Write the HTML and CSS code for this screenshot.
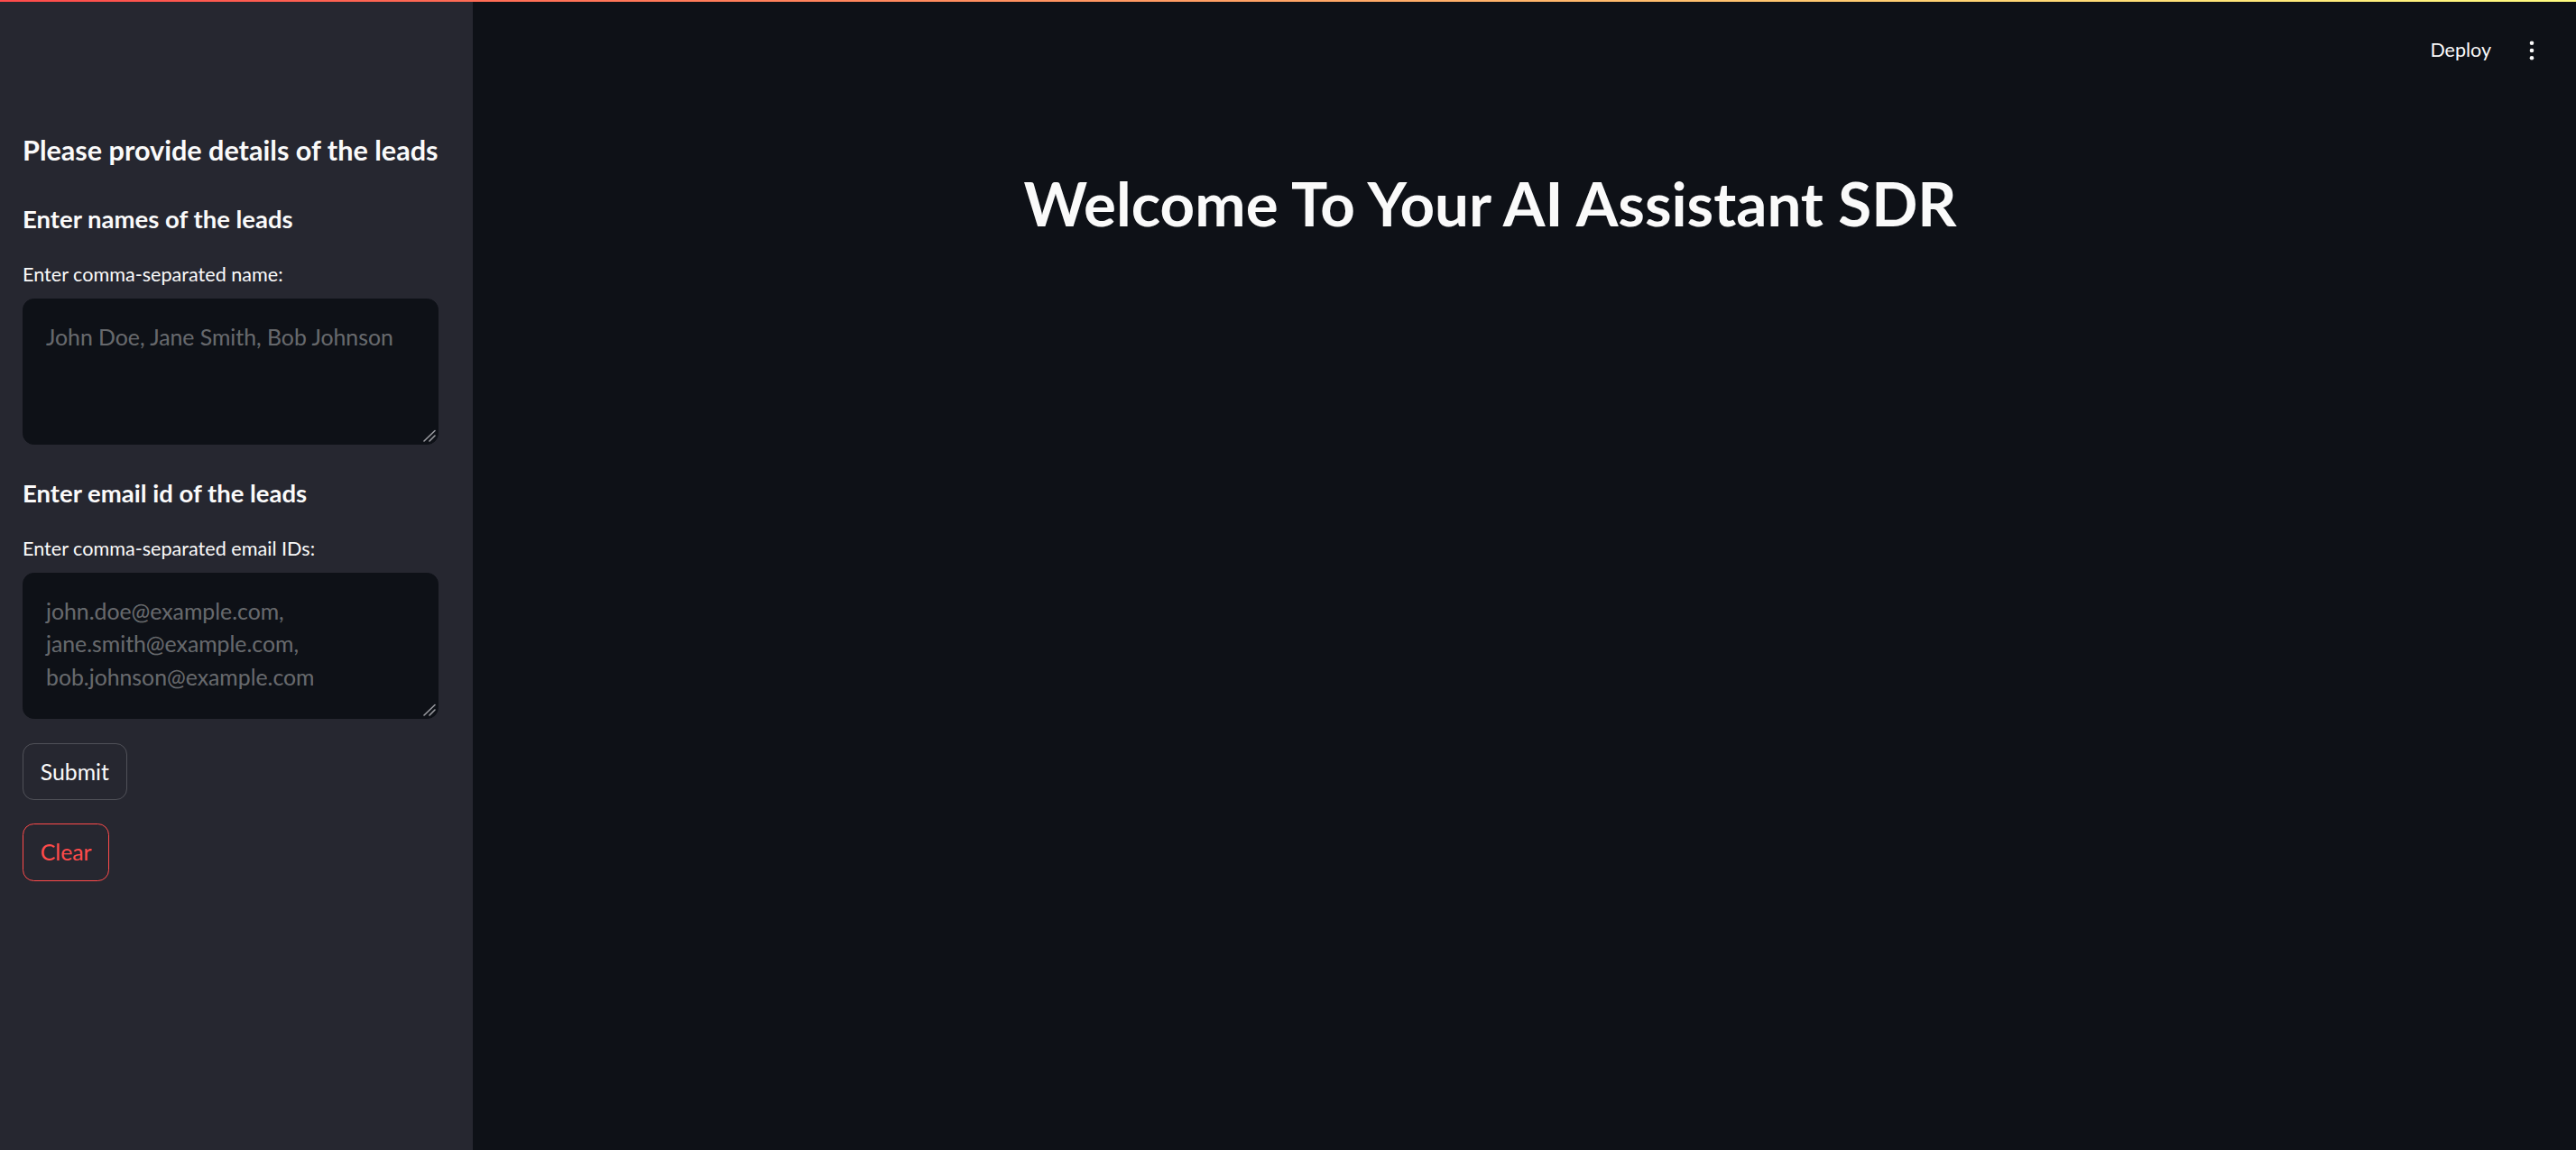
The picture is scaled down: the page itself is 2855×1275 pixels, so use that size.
FILE: index.html
```html
<!DOCTYPE html>
<html lang="en">
<head>
<meta charset="utf-8">
<title>AI Assistant SDR</title>
<link rel="stylesheet" href="styles.css">
</head>
<body>
<div class="decoration"></div>
<div class="app">
  <aside class="sidebar">
    <h2 class="sb-title">Please provide details of the leads</h2>
    <h3 class="sb-subtitle">Enter names of the leads</h3>
    <label class="field-label" for="names">Enter comma-separated name:</label>
    <div class="field-box">
      <textarea id="names" class="field-input" placeholder="John Doe, Jane Smith, Bob Johnson"></textarea>
      <svg class="grip" width="14" height="14" viewBox="0 0 14 14" aria-hidden="true">
        <line x1="1" y1="13" x2="13" y2="1.5"/>
        <line x1="7" y1="13" x2="13" y2="7"/>
      </svg>
    </div>
    <h3 class="sb-subtitle">Enter email id of the leads</h3>
    <label class="field-label" for="emails">Enter comma-separated email IDs:</label>
    <div class="field-box">
      <textarea id="emails" class="field-input" placeholder="john.doe@example.com, jane.smith@example.com, bob.johnson@example.com"></textarea>
      <svg class="grip" width="14" height="14" viewBox="0 0 14 14" aria-hidden="true">
        <line x1="1" y1="13" x2="13" y2="1.5"/>
        <line x1="7" y1="13" x2="13" y2="7"/>
      </svg>
    </div>
    <button class="btn" type="button">Submit</button>
    <button class="btn btn-danger" type="button">Clear</button>
  </aside>
  <main class="main">
    <header class="toolbar">
      <button class="deploy" type="button">Deploy</button>
      <button class="menu" type="button" aria-label="Main menu">
        <svg width="6" height="22" viewBox="0 0 6 22" aria-hidden="true">
          <circle cx="3" cy="2.8" r="2.3" fill="#fafafa"/>
          <circle cx="3" cy="11" r="2.3" fill="#fafafa"/>
          <circle cx="3" cy="19.2" r="2.3" fill="#fafafa"/>
        </svg>
      </button>
    </header>
    <div class="block">
      <h1 class="title">Welcome To Your AI Assistant SDR</h1>
    </div>
  </main>
</div>
</body>
</html>
```
FILE: styles.css
```css
html, body {
  margin: 0;
  height: 100%;
  background: #0e1117;
}

body {
  font-family: Lato, "Liberation Sans", sans-serif;
  color: #fafafa;
  overflow: hidden;
}

.decoration {
  height: 2px;
  background: linear-gradient(90deg, #ff4b4b, #fffd80);
}

.app {
  display: flex;
  height: calc(100% - 2px);
}

.sidebar {
  width: 524px;
  flex: none;
  box-sizing: border-box;
  background: #262730;
  padding: 146.8px 38px 0 25px;
  display: flex;
  flex-direction: column;
  align-items: flex-start;
}

.sb-title {
  margin: 0 0 3.3px;
  font-size: 30.6px;
  font-weight: 700;
  line-height: 1.2;
}

.sb-subtitle {
  margin: 37px 0 0;
  font-size: 27.5px;
  font-weight: 700;
  line-height: 1.2;
}

.field-label {
  margin-top: 32.8px;
  font-size: 21.6px;
  line-height: 1.2;
}

.field-box {
  position: relative;
  align-self: stretch;
  margin-top: 13.4px;
}

.field-input {
  display: block;
  width: 100%;
  height: 162px;
  box-sizing: border-box;
  padding: 24px 25px;
  border: 1px solid #0e1117;
  border-radius: 12.5px;
  background: #0e1117;
  color: #fafafa;
  font-family: Lato, "Liberation Sans", sans-serif;
  font-size: 24.8px;
  line-height: 36.5px;
  resize: none;
  outline: none;
}

.field-input::placeholder {
  color: rgba(250, 250, 250, 0.4);
  opacity: 1;
}

.grip {
  position: absolute;
  right: 3px;
  bottom: 3px;
  stroke: #9a9ba0;
  stroke-width: 1.6;
  stroke-linecap: round;
}

.btn {
  margin-top: 27px;
  height: 63.5px;
  box-sizing: border-box;
  padding: 0 18.75px;
  border: 1px solid rgba(250, 250, 250, 0.2);
  border-radius: 12.5px;
  background: transparent;
  color: #fafafa;
  font-family: Lato, "Liberation Sans", sans-serif;
  font-size: 24.8px;
  line-height: 1.2;
}

.btn-danger {
  margin-top: 26px;
  border-color: #ff4b4b;
  color: #ff4b4b;
}

.main {
  flex: 1;
  display: flex;
  flex-direction: column;
  min-width: 0;
}

.toolbar {
  height: 108px;
  display: flex;
  justify-content: flex-end;
  align-items: center;
  padding-right: 29px;
}

.deploy {
  margin-right: 25px;
  padding: 0;
  border: 0;
  background: none;
  color: #fafafa;
  font-family: Lato, "Liberation Sans", sans-serif;
  font-size: 21.5px;
  line-height: 1.2;
}

.menu {
  width: 40px;
  height: 40px;
  padding: 0;
  border: 0;
  background: none;
  display: flex;
  align-items: center;
  justify-content: center;
}

.block {
  width: 1110px;
  margin: 0 auto;
}

.title {
  margin: 75.3px 0 0;
  font-size: 67.3px;
  font-weight: 700;
  line-height: 1.2;
}
```
